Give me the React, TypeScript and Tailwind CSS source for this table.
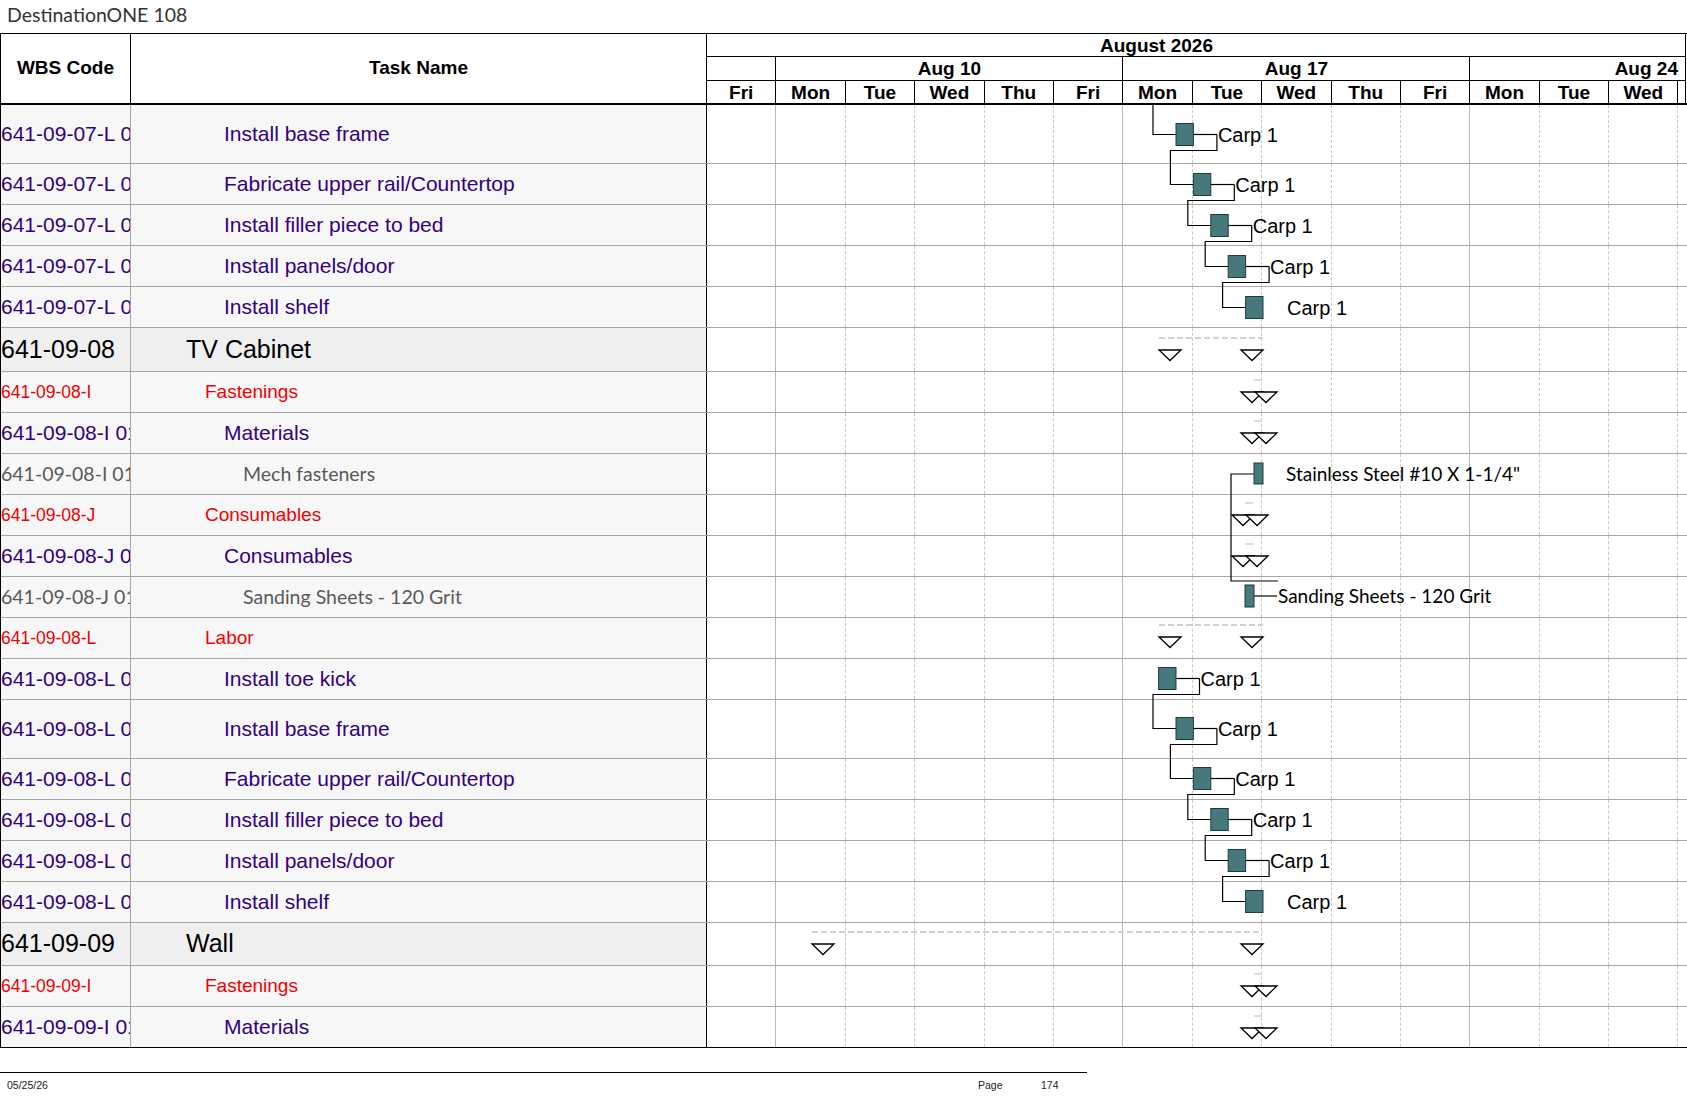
import React from "react";

type Kind = "summary" | "red" | "purple" | "gray";

interface Row {
  code: string;
  task: string;
  kind: Kind;
  h: number;
}

const rows: Row[] = [
  { code: "641-09-07-L 01", task: "Install base frame", kind: "purple", h: 59 },
  { code: "641-09-07-L 02", task: "Fabricate upper rail/Countertop", kind: "purple", h: 41 },
  { code: "641-09-07-L 03", task: "Install filler piece to bed", kind: "purple", h: 41 },
  { code: "641-09-07-L 04", task: "Install panels/door", kind: "purple", h: 41 },
  { code: "641-09-07-L 05", task: "Install shelf", kind: "purple", h: 41 },
  { code: "641-09-08", task: "TV Cabinet", kind: "summary", h: 44 },
  { code: "641-09-08-I", task: "Fastenings", kind: "red", h: 41 },
  { code: "641-09-08-I 01", task: "Materials", kind: "purple", h: 41 },
  { code: "641-09-08-I 01-01", task: "Mech fasteners", kind: "gray", h: 41 },
  { code: "641-09-08-J", task: "Consumables", kind: "red", h: 41 },
  { code: "641-09-08-J 01", task: "Consumables", kind: "purple", h: 41 },
  { code: "641-09-08-J 01-01", task: "Sanding Sheets - 120 Grit", kind: "gray", h: 41 },
  { code: "641-09-08-L", task: "Labor", kind: "red", h: 41 },
  { code: "641-09-08-L 01", task: "Install toe kick", kind: "purple", h: 41 },
  { code: "641-09-08-L 02", task: "Install base frame", kind: "purple", h: 59 },
  { code: "641-09-08-L 03", task: "Fabricate upper rail/Countertop", kind: "purple", h: 41 },
  { code: "641-09-08-L 04", task: "Install filler piece to bed", kind: "purple", h: 41 },
  { code: "641-09-08-L 05", task: "Install panels/door", kind: "purple", h: 41 },
  { code: "641-09-08-L 06", task: "Install shelf", kind: "purple", h: 41 },
  { code: "641-09-09", task: "Wall", kind: "summary", h: 43 },
  { code: "641-09-09-I", task: "Fastenings", kind: "red", h: 41 },
  { code: "641-09-09-I 01", task: "Materials", kind: "purple", h: 41 },
];

const days = ["Fri", "Mon", "Tue", "Wed", "Thu", "Fri", "Mon", "Tue", "Wed", "Thu", "Fri", "Mon", "Tue", "Wed"];
// right border of these day cells is a week boundary
const weekEnds = new Set([0, 5, 10]);

const codeCls: Record<Kind, string> = {
  summary: "text-[25px] text-black",
  red: "text-[17.5px] text-[#f00000]",
  purple: "text-[21px] text-[#33007f]",
  gray: "text-[19.5px] text-[#595959] font-['Lato',sans-serif]",
};

const taskCls: Record<Kind, string> = {
  summary: "pl-[55px] text-[25px] text-black",
  red: "pl-[74px] text-[19px] text-[#f00000]",
  purple: "pl-[93px] text-[21px] text-[#33007f]",
  gray: "pl-[112px] text-[19.5px] text-[#595959] font-['Lato',sans-serif]",
};

function GridCells() {
  return (
    <div className="flex h-full">
      {days.map((d, i) => (
        <div
          key={i}
          className={`w-[69.4px] shrink-0 h-full border-r ${
            weekEnds.has(i) ? "border-solid border-[#b8b8b8]" : "border-dashed border-[#c8c8c8]"
          }`}
        />
      ))}
      <div className="flex-1" />
    </div>
  );
}

const BW = 17.4;
const starts = [1175, 1192.4, 1209.8, 1227.2, 1244.6];

function tri(x: number, y: number) {
  return `${x},${y} ${x + 22},${y} ${x + 11},${y + 10.5}`;
}

function Summary({ x1, x2, y }: { x1: number; x2: number; y: number }) {
  return (
    <g>
      <line x1={x1} y1={y - 12} x2={x2} y2={y - 12} stroke="#d0d0d0" strokeWidth={2} strokeDasharray="6 3" />
      <polygon points={tri(x1, y)} fill="white" stroke="black" strokeWidth={1.3} />
      <polygon points={tri(x2 - 22, y)} fill="white" stroke="black" strokeWidth={1.3} />
    </g>
  );
}

function DoubleMark({ x, y }: { x: number; y: number }) {
  return (
    <g>
      <line x1={x + 13} y1={y - 12} x2={x + 21} y2={y - 12} stroke="#d0d0d0" strokeWidth={1.5} />
      <polygon points={tri(x, y)} fill="white" stroke="black" strokeWidth={1.3} />
      <polygon points={tri(x + 14, y)} fill="white" stroke="black" strokeWidth={1.3} />
    </g>
  );
}

function Chain({ cys }: { cys: number[] }) {
  return (
    <g>
      {cys.map((cy, k) => {
        const sx = starts[k];
        const le = sx + BW + 23.5;
        return (
          <g key={k}>
            {k < 4 && <line x1={sx + BW} y1={cy} x2={le} y2={cy} stroke="black" strokeWidth={1.2} />}
            {k < 4 && (
              <path
                d={`M${le},${cy} V${cy + 16} H${starts[k + 1] - 23} V${cys[k + 1]} H${starts[k + 1]}`}
                fill="none"
                stroke="black"
                strokeWidth={1.2}
              />
            )}
            <rect x={sx} y={cy - 11} width={BW} height={22} fill="#45797b" stroke="#1f3a3a" strokeWidth={1} />
            <text x={k < 4 ? le + 1 : sx + BW + 24} y={cy + 7} fontSize={20} fontFamily="'Liberation Sans', Arial, sans-serif">
              Carp 1
            </text>
          </g>
        );
      })}
    </g>
  );
}

function GanttOverlay() {
  const groupA = [133.5, 183.5, 224.5, 265.5, 306.5];
  const groupB = [727.5, 777.5, 818.5, 859.5, 900.5];
  return (
    <svg className="absolute left-[707px] top-0 pointer-events-none" width={980} height={942} viewBox="0 0 980 942">
      <g transform="translate(-707 -104)">
        {/* first carpentry chain */}
        <path d="M1152,104 V133.5 H1175" fill="none" stroke="black" strokeWidth={1.2} />
        <Chain cys={groupA} />

        {/* TV cabinet */}
        <Summary x1={1158} x2={1262} y={349} />
        <DoubleMark x={1240} y={391} />
        <DoubleMark x={1240} y={432} />

        {/* mech fasteners */}
        <path d="M1253,473 H1230 V580 H1277" fill="none" stroke="black" strokeWidth={1.2} />
        <rect x={1253} y={462} width={9} height={21} fill="#45797b" stroke="#1f3a3a" strokeWidth={1} />
        <text x={1285} y={480} fontSize={19} fontFamily="Lato, sans-serif">
          Stainless Steel #10 X 1-1/4"
        </text>

        <DoubleMark x={1231} y={514} />
        <DoubleMark x={1231} y={555} />

        {/* sanding sheets */}
        <line x1={1253} y1={595} x2={1276} y2={595} stroke="black" strokeWidth={1.2} />
        <rect x={1244} y={584} width={9} height={22} fill="#45797b" stroke="#1f3a3a" strokeWidth={1} />
        <text x={1277} y={602} fontSize={19} fontFamily="Lato, sans-serif">
          Sanding Sheets - 120 Grit
        </text>

        {/* labor */}
        <Summary x1={1158} x2={1262} y={636} />
        <line x1={1157.6 + BW} y1={677.5} x2={1198.5} y2={677.5} stroke="black" strokeWidth={1.2} />
        <path d="M1198.5,677.5 V693.5 H1152 V727.5 H1175" fill="none" stroke="black" strokeWidth={1.2} />
        <rect x={1157.6} y={666.5} width={BW} height={22} fill="#45797b" stroke="#1f3a3a" strokeWidth={1} />
        <text x={1199.5} y={684.5} fontSize={20} fontFamily="'Liberation Sans', Arial, sans-serif">
          Carp 1
        </text>
        <Chain cys={groupB} />

        {/* wall */}
        <Summary x1={811} x2={1262} y={943} />
        <DoubleMark x={1240} y={985} />
        <DoubleMark x={1240} y={1027} />
      </g>
    </svg>
  );
}

export default function App() {
  return (
    <div className="w-[1687px] h-[1097px] bg-white font-['Liberation_Sans',Arial,sans-serif] text-black overflow-hidden">
      {/* Title */}
      <div className="h-[33px] pl-[7px] pt-[3px] text-[19.5px] leading-[24px] text-[#333] font-['Lato',sans-serif]">
        DestinationONE 108
      </div>

      {/* Header */}
      <div className="flex h-[72px] border-t border-b-2 border-l border-black">
        <div className="w-[130px] shrink-0 border-r border-black flex items-center justify-center font-bold text-[19px]">
          WBS Code
        </div>
        <div className="w-[576px] shrink-0 border-r border-black flex items-center justify-center font-bold text-[19px]">
          Task Name
        </div>
        <div className="w-[979px] shrink-0 border-r border-black flex flex-col font-bold text-[19px] leading-none">
          <div className="h-[23px] border-b border-black flex items-center pl-[393px]">August 2026</div>
          <div className="h-[24px] border-b border-black flex">
            <div className="w-[69.4px] shrink-0 border-r border-black" />
            <div className="w-[347px] shrink-0 border-r border-black flex items-center justify-center">Aug 10</div>
            <div className="w-[347px] shrink-0 border-r border-black flex items-center justify-center">Aug 17</div>
            <div className="flex-1 flex items-center justify-end pr-[7px]">Aug 24</div>
          </div>
          <div className="flex-1 flex">
            {days.map((d, i) => (
              <div key={i} className="w-[69.4px] shrink-0 border-r border-black flex items-center justify-center">
                {d}
              </div>
            ))}
            <div className="flex-1" />
          </div>
        </div>
      </div>

      {/* Body */}
      <div className="relative border-l border-black">
        {rows.map((r, i) => {
          const last = i === rows.length - 1;
          const bg = r.kind === "summary" ? "bg-[#efefef]" : "bg-[#f7f7f7]";
          return (
            <div
              key={i}
              className={`flex border-b ${last ? "border-black" : "border-[#a6a6a6]"}`}
              style={{ height: r.h }}
            >
              <div
                className={`w-[130px] shrink-0 border-r border-[#a6a6a6] ${bg} flex items-center overflow-hidden whitespace-nowrap ${codeCls[r.kind]}`}
              >
                {r.code}
              </div>
              <div
                className={`w-[576px] shrink-0 border-r border-black ${bg} flex items-center whitespace-nowrap ${taskCls[r.kind]}`}
              >
                {r.task}
              </div>
              <div className="flex-1 bg-white">
                <GridCells />
              </div>
            </div>
          );
        })}
        <GanttOverlay />
      </div>

      {/* Footer */}
      <div className="mt-[24px] w-[1087px] border-t border-black" />
      <div className="flex w-[1087px] pt-[6px] text-[10.5px] leading-[12px] text-[#222]">
        <div className="w-[978px] pl-[7px]">05/25/26</div>
        <div className="w-[63px]">Page</div>
        <div>174</div>
      </div>
    </div>
  );
}
